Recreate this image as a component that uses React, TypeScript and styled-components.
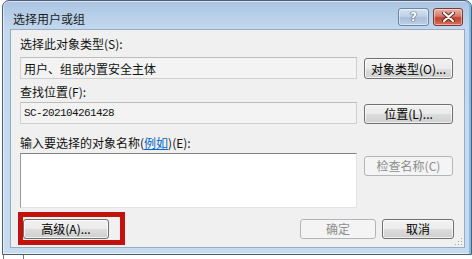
import React from 'react';
import styled, { createGlobalStyle } from 'styled-components';

const Global = createGlobalStyle`
  html, body { margin: 0; padding: 0; background: #ffffff; }
  body { font-family: "Noto Sans CJK SC", "Noto Sans", sans-serif; font-size: 12px; color: #000; }
  * { box-sizing: border-box; }
`;

const Page = styled.div`
  position: relative;
  width: 472px;
  height: 259px;
  overflow: hidden;
  background: #ffffff;
  display: flex;
  flex-direction: column;
`;

const Window = styled.div`
  margin-left: 2px;
  width: 470px;
  height: 255px;
  border: 1px solid #4f5e70;
  border-radius: 7px 7px 0 0;
  background: linear-gradient(to bottom, #aac5e2 0px, #c3d8ee 28px, #c7dbef 100%);
  box-shadow: inset -2px 0 0 #7dbbe8, inset 0 0 0 1px rgba(255, 255, 255, 0.55);
  display: flex;
  flex-direction: column;
`;

const TitleBar = styled.div`
  height: 28px;
  display: flex;
  align-items: flex-start;
  padding-left: 10px;
`;

const Title = styled.div`
  margin-top: 10px;
  font-size: 12px;
  line-height: 16px;
  color: #1b1b1b;
`;

const Caps = styled.div`
  margin-left: auto;
  margin-top: 7px;
  margin-right: 8px;
  display: flex;
  gap: 4px;
`;

const CapButton = styled.div<{ $close?: boolean }>`
  width: ${(p) => (p.$close ? 30 : 31)}px;
  height: 18px;
  border: 1px solid ${(p) => (p.$close ? '#7a3a33' : '#6d84a0')};
  border-radius: 3px;
  background: ${(p) =>
    p.$close
      ? 'linear-gradient(to bottom, #e7b2a8 0%, #d77c6e 45%, #c4402f 55%, #d2735f 100%)'
      : 'linear-gradient(to bottom, #d6e3f1 0%, #bfd1e5 45%, #a9bfd9 55%, #bcd0e6 100%)'};
  box-shadow: inset 0 0 0 1px rgba(255, 255, 255, 0.45);
  display: flex;
  align-items: center;
  justify-content: center;
`;

const HelpGlyph = styled.span`
  font-family: "DejaVu Sans", sans-serif;
  font-weight: bold;
  font-size: 12px;
  line-height: 12px;
  color: #ffffff;
  text-shadow: 0 0 1px #3f5573, 0 0 1px #3f5573, 0 0 1px #3f5573;
`;

const Client = styled.div`
  position: relative;
  margin: 0 6px 6px 7px;
  flex: 1;
  background: #f0f0f0;
  border: 1px solid #97abc3;
  padding: 6px 10px 0 9px;
  display: flex;
  flex-direction: column;
`;

const Label = styled.div<{ $top: number }>`
  margin-top: ${(p) => p.$top}px;
  height: 16px;
  line-height: 16px;
  font-size: 12px;
  white-space: nowrap;
  color: #111;
`;

const Link = styled.span`
  color: #0066cc;
  text-decoration: underline;
`;

const Row = styled.div<{ $top: number }>`
  margin-top: ${(p) => p.$top}px;
  display: flex;
  align-items: flex-start;
  gap: 7px;
`;

const ReadBox = styled.div<{ $mono?: boolean }>`
  width: 337px;
  height: 22px;
  border: 1px solid #cfcfcf;
  border-top-color: #bdbdbd;
  background: #f3f3f3;
  padding-left: 3px;
  display: flex;
  align-items: center;
  font-family: ${(p) => (p.$mono ? '"Liberation Mono", monospace' : 'inherit')};
  font-size: ${(p) => (p.$mono ? '11px' : '12px')};
  letter-spacing: ${(p) => (p.$mono ? '-0.6px' : '0')};
  color: #111;
`;

const TextArea = styled.div`
  width: 337px;
  height: 55px;
  background: #ffffff;
  border-top: 1px solid #7f7f7f;
  border-left: 1px solid #9a9a9a;
  border-right: 1px solid #e3e3e3;
  border-bottom: 1px solid #e3e3e3;
`;

const Button = styled.div<{ $w: number; $h?: number; $top?: number; $disabled?: boolean }>`
  width: ${(p) => p.$w}px;
  height: ${(p) => p.$h ?? 20}px;
  margin-top: ${(p) => p.$top ?? 0}px;
  border: 1px solid ${(p) => (p.$disabled ? '#b2b6b9' : '#707070')};
  border-radius: 3px;
  background: ${(p) =>
    p.$disabled
      ? '#f4f4f4'
      : 'linear-gradient(to bottom, #f2f2f2 0%, #ebebeb 50%, #dddddd 51%, #cfcfcf 100%)'};
  box-shadow: ${(p) => (p.$disabled ? 'none' : 'inset 0 0 0 1px rgba(255,255,255,0.7)')};
  color: ${(p) => (p.$disabled ? '#8d8d8d' : '#000000')};
  display: flex;
  align-items: center;
  justify-content: center;
  font-size: 12px;
  line-height: 14px;
  white-space: nowrap;
  flex-shrink: 0;
`;

const BottomRow = styled.div`
  margin-top: 11px;
  display: flex;
  align-items: center;
  padding-left: 3px;
`;

const Spacer = styled.div`
  flex: 1;
`;

const BottomGap = styled.div`
  width: 6px;
`;

const Grip = styled.svg`
  position: absolute;
  right: 1px;
  bottom: 1px;
`;

const RedMark = styled.div`
  position: absolute;
  left: 18px;
  top: 212px;
  width: 107px;
  height: 33px;
  border: 5px solid #c1120e;
`;

const Under = styled.div`
  height: 4px;
  display: flex;
`;

const UnderLine = styled.div<{ $left: number }>`
  margin-left: ${(p) => p.$left}px;
  width: 1px;
  background: #7a7a7a;
`;

export default function App() {
  return (
    <Page>
      <Global />
      <Window>
        <TitleBar>
          <Title>选择用户或组</Title>
          <Caps>
            <CapButton>
              <HelpGlyph>?</HelpGlyph>
            </CapButton>
            <CapButton $close>
              <svg width="13" height="10" viewBox="0 0 13 10">
                <path d="M2 1 L11 9 M11 1 L2 9" stroke="#5a221c" strokeWidth="4" strokeLinecap="round" />
                <path d="M2 1 L11 9 M11 1 L2 9" stroke="#ffffff" strokeWidth="2.2" strokeLinecap="round" />
              </svg>
            </CapButton>
          </Caps>
        </TitleBar>
        <Client>
          <Label $top={0}>选择此对象类型(S):</Label>
          <Row $top={5}>
            <ReadBox>用户、组或内置安全主体</ReadBox>
            <Button $w={89} $h={21} $top={1}>对象类型(O)...</Button>
          </Row>
          <Label $top={5}>查找位置(F):</Label>
          <Row $top={2}>
            <ReadBox $mono>SC-202104261428</ReadBox>
            <Button $w={89} $top={2}>位置(L)...</Button>
          </Row>
          <Label $top={11}>
            输入要选择的对象名称(<Link>例如</Link>)(E):
          </Label>
          <Row $top={2}>
            <TextArea />
            <Button $w={89} $top={3} $disabled>检查名称(C)</Button>
          </Row>
          <BottomRow>
            <Button $w={86}>高级(A)...</Button>
            <Spacer />
            <Button $w={76} $disabled>确定</Button>
            <BottomGap />
            <Button $w={72}>取消</Button>
          </BottomRow>
          <Grip width="10" height="10" viewBox="0 0 10 10">
            {[
              [8, 2], [8, 5], [5, 5], [8, 8], [5, 8], [2, 8],
            ].map(([x, y], i) => (
              <rect key={i} x={x} y={y} width="1" height="1" fill="#a0a0a0" />
            ))}
          </Grip>
        </Client>
      </Window>
      <Under>
        <UnderLine $left={3} />
        <UnderLine $left={19} />
      </Under>
      <RedMark />
    </Page>
  );
}
